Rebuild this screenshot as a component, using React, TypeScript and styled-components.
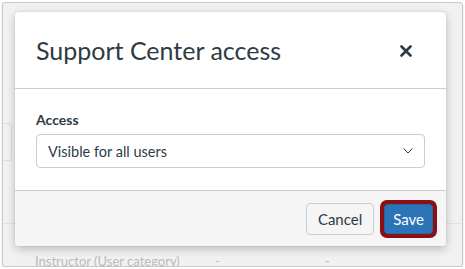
import React from 'react';
import styled, { createGlobalStyle } from 'styled-components';

const GlobalStyle = createGlobalStyle`
  html, body {
    margin: 0;
    padding: 0;
    background: #ffffff;
  }
  body {
    font-family: Lato, "Liberation Sans", sans-serif;
    color: #2d3b45;
  }
`;

const Frame = styled.div`
  position: relative;
  box-sizing: border-box;
  width: 461px;
  height: 265px;
  margin: 2px 0 0 2px;
  border: 1px solid #c9c9c9;
  border-radius: 3px;
  overflow: hidden;
  background: #f1f1f1;
  box-shadow: 0 1px 2px rgba(0, 0, 0, 0.15);
`;

const PageBehind = styled.div`
  display: flex;
  flex-direction: column;
  padding-top: 120px;
`;

const GhostField = styled.div`
  width: 40px;
  height: 36px;
  margin-left: -33px;
  border: 1px solid #dcdcdc;
  border-radius: 3px;
`;

const GhostRow = styled.div`
  display: flex;
  margin-top: 62px;
  padding: 29px 0 0 32px;
  border-top: 1px solid #e2e2e2;
  font-size: 13px;
  color: #b9bcbf;
`;

const GhostCell = styled.span<{ $w: number }>`
  width: ${(p) => p.$w}px;
  flex: none;
`;

const Modal = styled.div`
  position: absolute;
  top: 9px;
  left: 12px;
  width: 431px;
  height: 234px;
  display: flex;
  flex-direction: column;
  background: #ffffff;
  border-radius: 4px;
  overflow: hidden;
  box-shadow: 0 3px 10px rgba(0, 0, 0, 0.22), 0 0 2px rgba(0, 0, 0, 0.12);
`;

const Header = styled.div`
  height: 77px;
  box-sizing: border-box;
  display: flex;
  align-items: center;
  justify-content: space-between;
  padding: 0 30px 0 21px;
  border-bottom: 1px solid #c7cdd1;
`;

const Title = styled.h2`
  margin: 0;
  font-size: 25px;
  font-weight: 400;
  color: #2d3b45;
`;

const CloseButton = styled.button`
  display: flex;
  align-items: center;
  justify-content: center;
  width: 20px;
  height: 20px;
  padding: 0;
  margin-top: 1px;
  border: none;
  background: none;
  color: #2d3b45;
  cursor: pointer;
`;

const Body = styled.div`
  flex: 1;
  display: flex;
  flex-direction: column;
  gap: 6px;
  padding: 22px 21px 0;
`;

const Label = styled.label`
  font-size: 14px;
  font-weight: 700;
  color: #2d3b45;
`;

const Select = styled.div`
  height: 34px;
  box-sizing: border-box;
  display: flex;
  align-items: center;
  justify-content: space-between;
  padding: 0 11px;
  border: 1px solid #c7cdd1;
  border-radius: 4px;
  font-size: 14.5px;
  color: #2d3b45;
`;

const Footer = styled.div`
  height: 56px;
  box-sizing: border-box;
  display: flex;
  align-items: center;
  justify-content: flex-end;
  gap: 6px;
  padding: 0 9px 0 0;
  background: #f5f5f5;
  border-top: 1px solid #c7cdd1;
`;

const Button = styled.button<{ $primary?: boolean }>`
  height: 32px;
  box-sizing: border-box;
  padding: 0 ${(p) => (p.$primary ? '8px' : '11px')};
  border-radius: 4px;
  border: 1px solid ${(p) => (p.$primary ? '#2668a7' : '#c7cdd1')};
  background: ${(p) => (p.$primary ? '#2b74b8' : '#f5f5f5')};
  color: ${(p) => (p.$primary ? '#ffffff' : '#2d3b45')};
  font-family: Lato, "Liberation Sans", sans-serif;
  font-size: 15px;
  cursor: pointer;
`;

const Highlight = styled.span`
  display: inline-flex;
  padding: 2px;
  border: 2px solid #8b1016;
  border-radius: 7px;
  background: #8b1016;
  & > button {
    height: 30px;
    border-radius: 4px;
  }
`;

const App = () => (
  <>
    <GlobalStyle />
    <Frame>
      <PageBehind>
        <GhostField />
        <GhostRow>
          <GhostCell $w={180}>Instructor (User category)</GhostCell>
          <GhostCell $w={110}>-</GhostCell>
          <GhostCell $w={40}>-</GhostCell>
        </GhostRow>
      </PageBehind>
      <Modal>
        <Header>
          <Title>Support Center access</Title>
          <CloseButton aria-label="Close">
            <svg width="12" height="12" viewBox="0 0 12 12">
              <path d="M1.5 1.5 L10.5 10.5 M10.5 1.5 L1.5 10.5" stroke="currentColor" strokeWidth="2.6" strokeLinecap="round" />
            </svg>
          </CloseButton>
        </Header>
        <Body>
          <Label>Access</Label>
          <Select>
            <span>Visible for all users</span>
            <svg width="10" height="6" viewBox="0 0 10 6">
              <path d="M0.5 0.5 L5 5 L9.5 0.5" fill="none" stroke="#2d3b45" strokeWidth="1" />
            </svg>
          </Select>
        </Body>
        <Footer>
          <Button>Cancel</Button>
          <Highlight>
            <Button $primary>Save</Button>
          </Highlight>
        </Footer>
      </Modal>
    </Frame>
  </>
);

export default App;
